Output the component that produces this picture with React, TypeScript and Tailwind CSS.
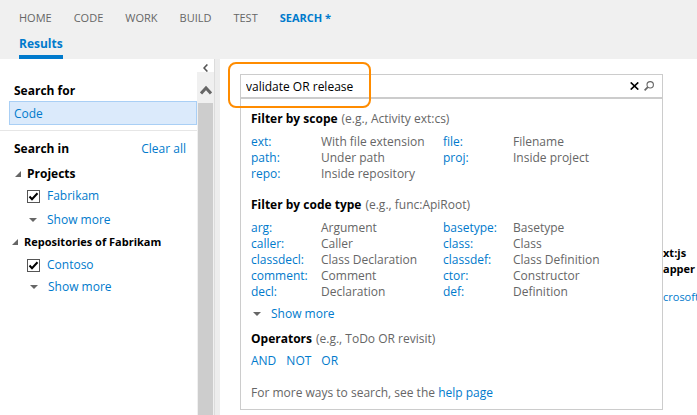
import { useState } from "react";

const tabs = ["HOME", "CODE", "WORK", "BUILD", "TEST"];

const scopeFilters = [
  ["ext:", "With file extension", "file:", "Filename"],
  ["path:", "Under path", "proj:", "Inside project"],
  ["repo:", "Inside repository", "", ""],
];

const codeFilters = [
  ["arg:", "Argument", "basetype:", "Basetype"],
  ["caller:", "Caller", "class:", "Class"],
  ["classdecl:", "Class Declaration", "classdef:", "Class Definition"],
  ["comment:", "Comment", "ctor:", "Constructor"],
  ["decl:", "Declaration", "def:", "Definition"],
];

function FilterTable({ label, rows }: { label: string; rows: string[][] }) {
  return (
    <table aria-label={label} className="mt-[7px] w-full table-fixed border-collapse text-left">
      <colgroup>
        <col className="w-[70px]" />
        <col className="w-[122px]" />
        <col className="w-[70px]" />
        <col />
      </colgroup>
      <tbody>
        {rows.map((row) => (
          <tr key={row[0]} className="h-4">
            {row.map((cell, i) => (
              <td key={i} className="p-0 whitespace-nowrap text-[#666]">
                {i % 2 === 0 && cell ? (
                  <a href="#filter" className="text-[#007acc]">{cell}</a>
                ) : (
                  cell
                )}
              </td>
            ))}
          </tr>
        ))}
      </tbody>
    </table>
  );
}

function Hint({ title, example }: { title: string; example: string }) {
  return (
    <div className="flex items-baseline gap-1 whitespace-nowrap">
      <h3 className="font-bold text-black">{title}</h3>
      <span className="text-[#666]">{example}</span>
    </div>
  );
}

function ShowMore() {
  return (
    <button type="button" className="flex items-center gap-[10px] text-[#007acc]">
      <svg width="8" height="4" viewBox="0 0 8 4" fill="#666" aria-hidden="true">
        <path d="M0 0h8L4 4z" />
      </svg>
      Show more
    </button>
  );
}

function Group({ title }: { title: string }) {
  return (
    <h3 className="flex items-center gap-[6px] font-bold whitespace-nowrap text-black">
      <svg width="6" height="6" viewBox="0 0 6 6" fill="#666" className="shrink-0" aria-hidden="true">
        <path d="M6 0v6H0z" />
      </svg>
      {title}
    </h3>
  );
}

function Check({ label }: { label: string }) {
  const [on, setOn] = useState(true);
  return (
    <label className="flex items-center gap-[7px] text-[#007acc]">
      <span className="grid">
        <input
          type="checkbox"
          checked={on}
          onChange={() => setOn(!on)}
          className="col-start-1 row-start-1 size-[13px] appearance-none border border-[#555] bg-white"
        />
        {on && (
          <svg width="13" height="13" viewBox="0 0 13 13" className="pointer-events-none col-start-1 row-start-1" aria-hidden="true">
            <path d="M2.5 6.5 5 9.2 10.5 3.2" fill="none" stroke="#000" strokeWidth="2" />
          </svg>
        )}
      </span>
      {label}
    </label>
  );
}

export default function App() {
  const [query, setQuery] = useState("validate OR release");
  return (
    <div className="flex min-h-screen flex-col overflow-hidden bg-white font-['Open_Sans','Noto_Sans',sans-serif] text-[12px] leading-4">
      <header className="bg-[#f0f0f0] pl-[19px]">
        <nav className="flex gap-[22px] pt-[10px] text-[11px] leading-4 text-[#666]">
          {tabs.map((t) => (
            <a key={t} href="#tab">{t}</a>
          ))}
          <a href="#search" className="font-bold text-[#007acc]">SEARCH *</a>
        </nav>
        <a href="#results" className="mt-[10px] inline-block border-b-4 border-[#007acc] pb-[3px] align-top font-bold text-[#007acc]">
          Results
        </a>
      </header>

      <div className="flex flex-1">
        <aside className="flex w-[220px] shrink-0">
          <div className="min-w-0 flex-1">
            <section className="border-b border-[#e6e6e6] pt-6 pb-[5px] pl-[9px]">
              <h2 className="pl-[5px] font-bold">Search for</h2>
              <a href="#code" className="mt-[2px] block border border-[#a9cff5] bg-[#dbeafb] pt-1 pb-[2px] pl-1 text-[#007acc]">
                Code
              </a>
            </section>
            <section className="pt-[10px] pr-[11px] pl-3">
              <div className="flex justify-between pl-[2px]">
                <h2 className="font-bold">Search in</h2>
                <button type="button" className="text-[#007acc]">Clear all</button>
              </div>
              <div className="mt-[9px] pl-[3px]">
                <Group title="Projects" />
                <div className="mt-[6px] ml-3">
                  <Check label="Fabrikam" />
                </div>
                <div className="mt-2 ml-[14px]">
                  <ShowMore />
                </div>
              </div>
              <div className="mt-[6px]">
                <div className="text-[11px] leading-4">
                  <Group title="Repositories of Fabrikam" />
                </div>
                <div className="mt-[7px] ml-[15px]">
                  <Check label="Contoso" />
                </div>
                <div className="mt-[6px] ml-[18px]">
                  <ShowMore />
                </div>
              </div>
            </section>
          </div>
          <div className="flex w-[17px] flex-col">
            <button type="button" aria-label="Collapse pane" className="flex h-[13px] items-end justify-center">
              <svg width="5" height="8" viewBox="0 0 5 8" fill="none" stroke="#555" strokeWidth="1.6" aria-hidden="true">
                <path d="M4.4.5 1 4l3.4 3.5" />
              </svg>
            </button>
            <div className="flex flex-1 flex-col bg-[#f0f0f0] px-px">
              <button type="button" aria-label="Scroll up" className="flex h-[31px] items-center justify-center pt-1">
                <svg width="12" height="10" viewBox="0 0 12 10" fill="none" stroke="#666" strokeWidth="3" aria-hidden="true">
                  <path d="m1 8.5 5-5.500 5 5.500" />
                </svg>
              </button>
              <div className="flex-1 bg-[#cdcdcd]" />
            </div>
          </div>
          <div className="w-[6px] border-l border-[#dcdcdc] bg-[#ededed]" />
        </aside>

        <main className="flex min-w-0 flex-1 pt-[15px] pb-[5px] pl-5">
          <div className="relative min-w-0 flex-1">
            <form className="flex h-[23px] items-center border border-b-0 border-[#ccc] pr-2" onSubmit={(e) => e.preventDefault()}>
              <input
                type="text"
                aria-label="Search code"
                value={query}
                onChange={(e) => setQuery(e.target.value)}
                className="h-[22px] min-w-0 flex-1 pl-[5px] text-black outline-none"
              />
              <button type="button" aria-label="Clear search" onClick={() => setQuery("")} className="mr-[5px]">
                <svg width="9" height="8" viewBox="0 0 9 8" stroke="#000" strokeWidth="1.600" aria-hidden="true">
                  <path d="m.7.4 7.600 7.200M8.300.4.7 7.600" />
                </svg>
              </button>
              <button type="submit" aria-label="Search">
                <svg width="10" height="10" viewBox="0 0 10 10" fill="none" stroke="#666" aria-hidden="true">
                  <circle cx="6.200" cy="3.800" r="3.200" strokeWidth="1.100" />
                  <path d="M3.800 6.200.6 9.400" strokeWidth="1.700" />
                </svg>
              </button>
            </form>
            <div className="border border-t-2 border-[#ccc] bg-white px-[10px] pt-3 pb-2">
              <Hint title="Filter by scope" example="(e.g., Activity ext:cs)" />
              <FilterTable label="Filter by scope" rows={scopeFilters} />
              <div className="mt-[15px]">
                <Hint title="Filter by code type" example="(e.g., func:ApiRoot)" />
              </div>
              <FilterTable label="Filter by code type" rows={codeFilters} />
              <div className="mt-[6px] ml-[2px]">
                <ShowMore />
              </div>
              <div className="mt-[9px]">
                <Hint title="Operators" example="(e.g., ToDo OR revisit)" />
              </div>
              <div className="mt-[6px] flex gap-[10px] text-[#007acc]">
                <a href="#and">AND</a>
                <a href="#not">NOT</a>
                <a href="#or">OR</a>
              </div>
              <p className="mt-4 text-[#666]">
                For more ways to search, see the <a href="#help" className="text-[#007acc]">help page</a>
              </p>
            </div>
            <div className="pointer-events-none absolute -top-3 -left-3 h-[46px] w-[143px] rounded-lg border-2 border-[#ff8c00]" />
          </div>
          <div className="w-[34px] shrink-0 pt-[171px] text-[11px] leading-4 whitespace-nowrap">
            <p className="font-bold">xt:js</p>
            <p className="font-bold">apper</p>
            <a href="#repo" className="mt-3 block text-[#007acc]">crosoft</a>
          </div>
        </main>
      </div>
    </div>
  );
}
